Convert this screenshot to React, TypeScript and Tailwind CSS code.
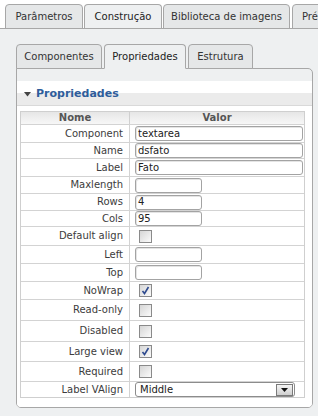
import React from 'react';

type Row = {
  label: string;
  kind: 'text' | 'short' | 'check' | 'select';
  value?: string;
  checked?: boolean;
  h: string;
};

const rows: Row[] = [
  { label: 'Component', kind: 'text', value: 'textarea', h: 'h-[18px]' },
  { label: 'Name', kind: 'text', value: 'dsfato', h: 'h-[16px]' },
  { label: 'Label', kind: 'text', value: 'Fato', h: 'h-[18px]' },
  { label: 'Maxlength', kind: 'short', value: '', h: 'h-[17px]' },
  { label: 'Rows', kind: 'short', value: '4', h: 'h-[17px]' },
  { label: 'Cols', kind: 'short', value: '95', h: 'h-[16px]' },
  { label: 'Default align', kind: 'check', h: 'h-[19px]' },
  { label: 'Left', kind: 'short', value: '', h: 'h-[18px]' },
  { label: 'Top', kind: 'short', value: '', h: 'h-[18px]' },
  { label: 'NoWrap', kind: 'check', checked: true, h: 'h-[18px]' },
  { label: 'Read-only', kind: 'check', h: 'h-[21px]' },
  { label: 'Disabled', kind: 'check', h: 'h-[21px]' },
  { label: 'Large view', kind: 'check', checked: true, h: 'h-[20px]' },
  { label: 'Required', kind: 'check', h: 'h-[20px]' },
  { label: 'Label VAlign', kind: 'select', value: 'Middle', h: 'h-[16px]' },
];

function Checkbox({ checked }: { checked?: boolean }) {
  return (
    <span className="ml-[4px] flex h-[13px] w-[13px] items-center justify-center border border-[#8a8a8a] bg-gradient-to-br from-[#d6d6d6] to-[#fbfbfb]">
      {checked && (
        <svg width="9" height="9" viewBox="0 0 9 9">
          <path d="M1.5 5 L3.5 7.5 L7.5 1" fill="none" stroke="#2f4b8f" strokeWidth="1.6" />
        </svg>
      )}
    </span>
  );
}

function ValueCell({ row }: { row: Row }) {
  if (row.kind === 'check') return <Checkbox checked={row.checked} />;
  if (row.kind === 'select') {
    return (
      <div className="flex h-[15px] w-[160px] items-center justify-between rounded-[3px] border border-[#8c8c8c] bg-white pl-[4px] pr-px text-[#222]">
        <span>{row.value}</span>
        <span className="flex h-[12px] w-[17px] items-center justify-center border border-[#7a7a7a] bg-gradient-to-b from-[#f4f4f4] to-[#cfcfcf]">
          <svg width="7" height="4" viewBox="0 0 7 4">
            <path d="M0 0 H7 L3.5 4 Z" fill="#111" />
          </svg>
        </span>
      </div>
    );
  }
  return (
    <div
      className={
        'flex h-[15px] items-center rounded-[3px] border border-[#a3a3a3] bg-white pl-[2px] text-[#222] shadow-[inset_1px_1px_0_#e4e4e4] ' +
        (row.kind === 'text' ? 'w-[168px]' : 'w-[67px]')
      }
    >
      {row.value}
    </div>
  );
}

function OuterTab({ label, active, w }: { label: string; active?: boolean; w: string }) {
  return (
    <div
      className={
        'relative -mb-px flex h-[25px] shrink-0 items-center justify-center whitespace-nowrap rounded-t-[4px] border border-[#a7a7a7] ' +
        w +
        (active ? ' border-b-[#eef0f1] bg-[#eef0f1] text-[#222]' : ' bg-[#e5e7e8] text-[#333]')
      }
    >
      {label}
    </div>
  );
}

export default function App() {
  return (
    <div className="flex h-[416px] w-[318px] flex-col overflow-hidden bg-white font-['DejaVu_Sans',sans-serif] text-[10px] leading-[12px] text-[#333]">
      {/* top level tabs */}
      <div className="flex items-end gap-px overflow-hidden border-b border-[#a7a7a7] pl-[5px] pt-[4px]">
        <OuterTab label="Parâmetros" w="w-[78px]" />
        <OuterTab label="Construção" w="w-[78px]" active />
        <OuterTab label="Biblioteca de imagens" w="w-[127px]" />
        <div className="relative -mb-px ml-px flex h-[25px] w-[60px] shrink-0 items-center whitespace-nowrap rounded-t-[4px] border border-[#a7a7a7] bg-[#e5e7e8] pl-[9px]">
          Pré-
        </div>
      </div>

      <div className="flex-1 bg-[#eef0f1] pl-[16px] pr-[5px] pt-[15px]">
        {/* inner tabs */}
        <div className="relative z-10 flex items-end gap-[2px]">
          <OuterTab label="Componentes" w="w-[86px]" />
          <OuterTab label="Propriedades" w="w-[82px]" active />
          <OuterTab label="Estrutura" w="w-[65px]" />
        </div>

        <div className="w-[297px] rounded-b-[5px] rounded-tr-[5px] border border-[#a7a7a7] bg-[#eef0f1] pt-[12px]">
          <div className="h-[326px] rounded-b-[4px] bg-white">
            {/* section header */}
            <div className="relative h-[25px] border-b border-[#d9d9d9] bg-[linear-gradient(#ffffff_0,#ffffff_12px,#ebebeb_12px,#ebebeb_100%)]">
              <div className="flex h-full items-center pl-[7px]">
                <svg width="7" height="5" viewBox="0 0 7 5" className="mr-[5px] mt-[2px]">
                  <path d="M0 0 H7 L3.5 4.5 Z" fill="#444" />
                </svg>
                <span className="text-[11px] font-bold leading-[13px] text-[#2e5d9b]">Propriedades</span>
              </div>
            </div>

            {/* table */}
            <div className="ml-[3px] mt-[5px] w-[285px] border border-[#cfcfcf]">
              <div className="flex h-[12px] bg-[linear-gradient(#e6e6e6,#f7f7f7)] font-bold leading-[12px] text-[#555]">
                <div className="w-[109px] border-r border-[#cfcfcf] text-center">Nome</div>
                <div className="flex-1 text-center">Valor</div>
              </div>
              {rows.map((r) => (
                <div key={r.label} className={'flex border-t border-[#d3d3d3] ' + r.h}>
                  <div className="flex w-[109px] items-center justify-end border-r border-[#d3d3d3] pr-[6px] text-[#3c3c3c]">
                    {r.label}
                  </div>
                  <div className="flex flex-1 items-center pl-[5px]">
                    <ValueCell row={r} />
                  </div>
                </div>
              ))}
            </div>
          </div>
        </div>
      </div>
    </div>
  );
}
